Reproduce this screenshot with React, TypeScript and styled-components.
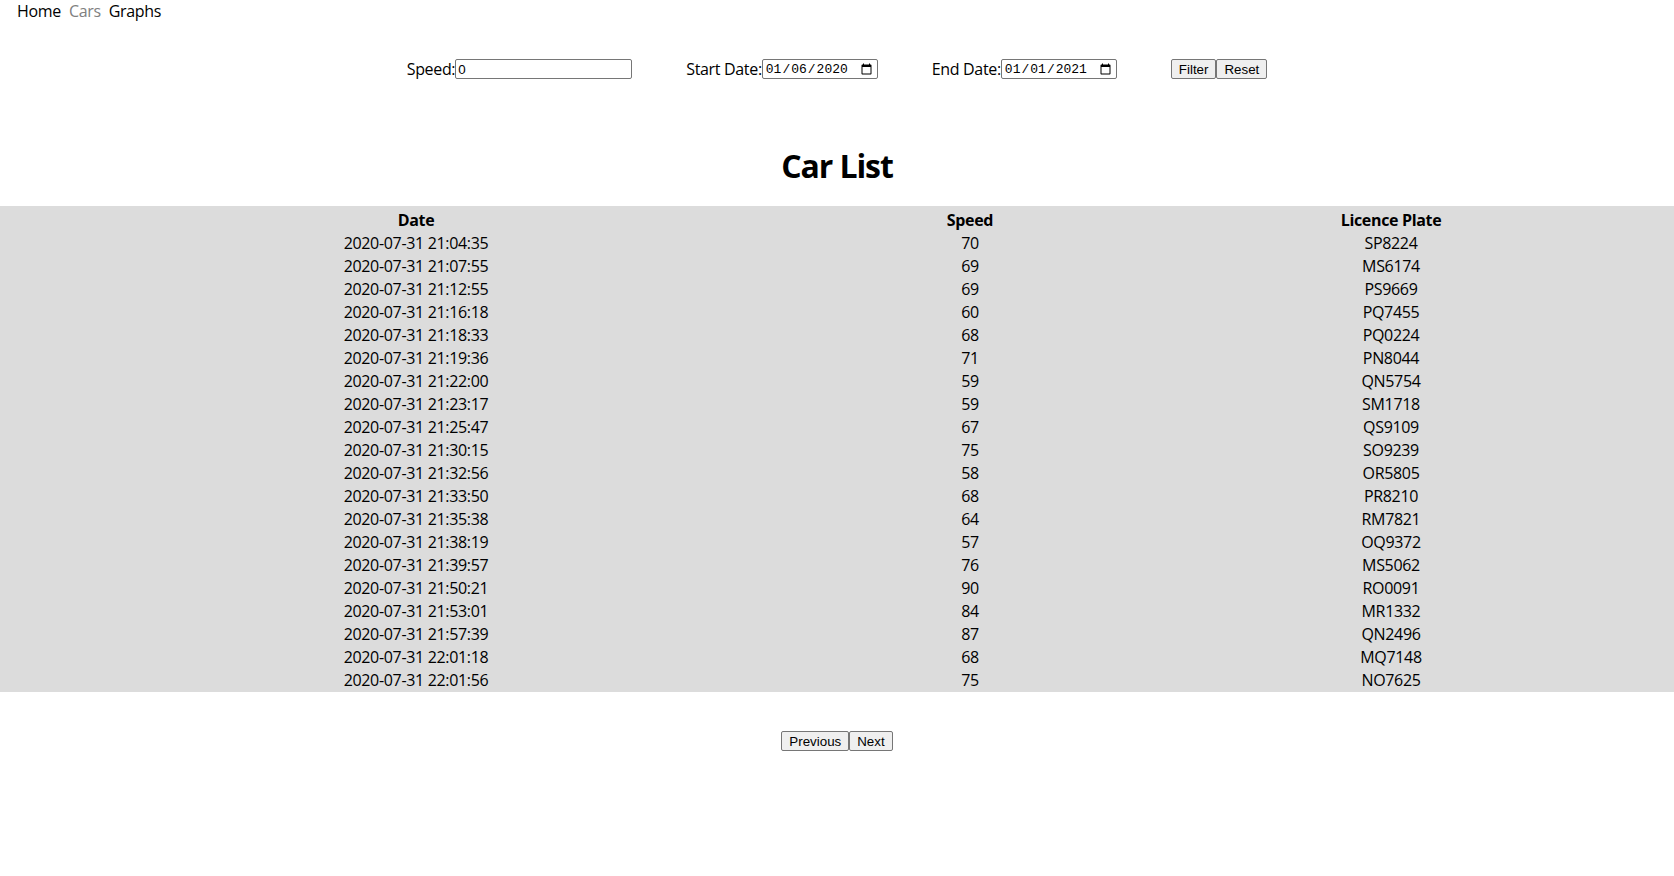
import React from "react";
import styled, { createGlobalStyle } from "styled-components";

const GlobalStyle = createGlobalStyle`
  body {
    margin: 0;
    background: #fff;
    color: #000;
    font-family: "Open Sans", "Noto Sans", sans-serif;
    font-size: 16px;
    letter-spacing: -0.33px;
  }
`;

const cars = [
  ["2020-07-31 21:04:35", 70, "SP8224"],
  ["2020-07-31 21:07:55", 69, "MS6174"],
  ["2020-07-31 21:12:55", 69, "PS9669"],
  ["2020-07-31 21:16:18", 60, "PQ7455"],
  ["2020-07-31 21:18:33", 68, "PQ0224"],
  ["2020-07-31 21:19:36", 71, "PN8044"],
  ["2020-07-31 21:22:00", 59, "QN5754"],
  ["2020-07-31 21:23:17", 59, "SM1718"],
  ["2020-07-31 21:25:47", 67, "QS9109"],
  ["2020-07-31 21:30:15", 75, "SO9239"],
  ["2020-07-31 21:32:56", 58, "OR5805"],
  ["2020-07-31 21:33:50", 68, "PR8210"],
  ["2020-07-31 21:35:38", 64, "RM7821"],
  ["2020-07-31 21:38:19", 57, "OQ9372"],
  ["2020-07-31 21:39:57", 76, "MS5062"],
  ["2020-07-31 21:50:21", 90, "RO0091"],
  ["2020-07-31 21:53:01", 84, "MR1332"],
  ["2020-07-31 21:57:39", 87, "QN2496"],
  ["2020-07-31 22:01:18", 68, "MQ7148"],
  ["2020-07-31 22:01:56", 75, "NO7625"],
];

const App = () => {
  return (
    <>
      <GlobalStyle />
      <Nav>
        <NavLink href="#">Home</NavLink>
        <NavLink href="#" $active>
          Cars
        </NavLink>
        <NavLink href="#">Graphs</NavLink>
      </Nav>

      <FilterBar>
        <Field>
          Speed:
          <TextInput type="text" defaultValue="0" />
        </Field>
        <Field>
          Start Date:
          <DateInput type="date" defaultValue="2020-01-06" />
        </Field>
        <Field>
          End Date:
          <DateInput type="date" defaultValue="2021-01-01" />
        </Field>
        <ButtonGroup>
          <Button>Filter</Button>
          <Button>Reset</Button>
        </ButtonGroup>
      </FilterBar>

      <Title>Car List</Title>

      <Table>
        <colgroup>
          <col style={{ width: 832 }} />
          <col style={{ width: 276 }} />
          <col />
        </colgroup>
        <thead>
          <tr>
            <Th>Date</Th>
            <Th>Speed</Th>
            <Th>Licence Plate</Th>
          </tr>
        </thead>
        <tbody>
          {cars.map(([date, speed, plate]) => (
            <tr key={date as string}>
              <Td>{date}</Td>
              <Td>{speed}</Td>
              <Td>{plate}</Td>
            </tr>
          ))}
        </tbody>
      </Table>

      <Pager>
        <Button>Previous</Button>
        <Button>Next</Button>
      </Pager>
    </>
  );
};

export default App;

const Nav = styled.nav`
  display: flex;
  gap: 8px;
  padding-left: 17px;
  height: 22px;
  align-items: center;
  line-height: 21px;
`;

const NavLink = styled.a<{ $active?: boolean }>`
  color: ${({ $active }) => ($active ? "#808080" : "#000")};
  text-decoration: none;
`;

const FilterBar = styled.div`
  display: flex;
  justify-content: center;
  align-items: center;
  gap: 54px;
  margin-top: 37px;
  height: 20px;
`;

const Field = styled.label`
  display: flex;
  align-items: center;
  white-space: nowrap;
  line-height: 20px;
`;

const TextInput = styled.input`
  box-sizing: border-box;
  width: 177px;
  height: 20px;
  padding: 1px 2px;
  border: 1px solid #767676;
  border-radius: 2px;
  font-family: "Liberation Sans", Arial, sans-serif;
  font-size: 13.33px;
  letter-spacing: normal;
`;

const DateInput = styled.input`
  box-sizing: border-box;
  width: 116px;
  height: 20px;
  padding: 0 2px;
  border: 1px solid #767676;
  border-radius: 2px;
  font-family: "Liberation Mono", monospace;
  font-size: 13px;
  letter-spacing: normal;
`;

const ButtonGroup = styled.div`
  display: flex;
`;

const Button = styled.button`
  box-sizing: border-box;
  height: 20px;
  padding: 0 7px;
  background: #efefef;
  border: 1px solid #767676;
  border-radius: 2px;
  font-family: "Liberation Sans", Arial, sans-serif;
  font-size: 13.33px;
  letter-spacing: normal;
  color: #000;
`;

const Title = styled.h1`
  margin: 65px 0 19px;
  text-align: center;
  font-size: 32px;
  line-height: 43px;
  font-weight: 700;
  letter-spacing: -1.1px;
`;

const Table = styled.table`
  width: 100%;
  border-collapse: separate;
  border-spacing: 0;
  padding-top: 3px;
  table-layout: fixed;
  background: #dcdcdc;
`;

const Th = styled.th`
  padding: 1px;
  line-height: 21px;
  font-weight: 700;
  text-align: center;
`;

const Td = styled.td`
  padding: 1px;
  line-height: 21px;
  text-align: center;
`;

const Pager = styled.div`
  display: flex;
  justify-content: center;
  margin-top: 39px;
`;
